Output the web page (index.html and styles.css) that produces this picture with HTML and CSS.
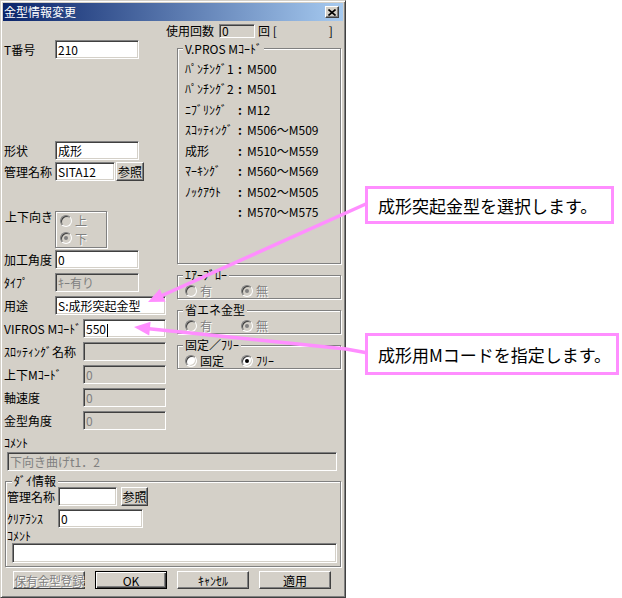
FILE: index.html
```html
<!DOCTYPE html>
<html lang="ja">
<head>
    <meta charset="UTF-8">
    <title>金型情報変更</title>
    <link rel="stylesheet" href="styles.css">
</head>
<body>
<div class="page">
    <!-- Dialog -->
    <div class="window">
        <div class="titlebar">
            <span class="title">金型情報変更</span>
            <span class="close-btn">
                <svg width="8" height="7" viewBox="0 0 8 7"><path d="M0.5 0.5 L7.5 6.5 M7.5 0.5 L0.5 6.5" stroke="#000" stroke-width="1.6"/></svg>
            </span>
        </div>

        <div class="usage">
            <span class="usage-label">使用回数</span>
            <span class="edit edit-usage">0</span>
            <span>回 [</span>
            <span class="usage-end">]</span>
        </div>

        <div class="main">
            <!-- Left column -->
            <div class="left-col">
                <div class="row"><span class="lbl">T番号</span><span class="edit w84">210</span></div>
                <div class="row row-shape"><span class="lbl">形状</span><span class="edit w84">成形</span></div>
                <div class="row row-kanri"><span class="lbl">管理名称</span><span class="edit w60">SITA12</span><span class="btn btn-ref">参照</span></div>
                <div class="row row-dir">
                    <span class="lbl">上下向き</span>
                    <div class="radio-frame etched">
                        <span class="radio disabled"><span class="dot"></span>上</span>
                        <span class="radio disabled"><span class="dot checked"></span>下</span>
                    </div>
                </div>
                <div class="field-list">
                    <div class="row"><span class="lbl">加工角度</span><span class="edit w84">0</span></div>
                    <div class="row"><span class="lbl">ﾀｲﾌﾟ</span><span class="edit disabled w84">ｷｰ有り</span></div>
                    <div class="row"><span class="lbl">用途</span><span class="edit w111">S:成形突起金型</span></div>
                    <div class="row"><span class="lbl lbl-wide">VIFROS Mｺｰﾄﾞ</span><span class="edit w83">550<span class="caret"></span></span></div>
                    <div class="row"><span class="lbl lbl-wide">ｽﾛｯﾃｨﾝｸﾞ名称</span><span class="edit disabled w83"></span></div>
                    <div class="row"><span class="lbl lbl-wide">上下Mｺｰﾄﾞ</span><span class="edit disabled w83">0</span></div>
                    <div class="row"><span class="lbl lbl-wide">軸速度</span><span class="edit disabled w83">0</span></div>
                    <div class="row"><span class="lbl lbl-wide">金型角度</span><span class="edit disabled w83">0</span></div>
                </div>
            </div>

            <!-- Right column -->
            <div class="right-col">
                <fieldset class="group group-mcode">
                    <legend>V.PROS Mｺｰﾄﾞ</legend>
                    <div class="mrow"><span class="mname">ﾊﾟﾝﾁﾝｸﾞ1</span><span class="mcolon">:</span><span>M500</span></div>
                    <div class="mrow"><span class="mname">ﾊﾟﾝﾁﾝｸﾞ2</span><span class="mcolon">:</span><span>M501</span></div>
                    <div class="mrow"><span class="mname">ﾆﾌﾞﾘﾝｸﾞ</span><span class="mcolon">:</span><span>M12</span></div>
                    <div class="mrow"><span class="mname">ｽｺｯﾃｨﾝｸﾞ</span><span class="mcolon">:</span><span>M506～M509</span></div>
                    <div class="mrow"><span class="mname">成形</span><span class="mcolon">:</span><span>M510～M559</span></div>
                    <div class="mrow"><span class="mname">ﾏｰｷﾝｸﾞ</span><span class="mcolon">:</span><span>M560～M569</span></div>
                    <div class="mrow"><span class="mname">ﾉｯｸｱｳﾄ</span><span class="mcolon">:</span><span>M502～M505</span></div>
                    <div class="mrow"><span class="mname"></span><span class="mcolon">:</span><span>M570～M575</span></div>
                </fieldset>

                <fieldset class="group group-radio">
                    <legend>ｴｱｰﾌﾞﾛｰ</legend>
                    <div class="radio-row">
                        <span class="radio disabled"><span class="dot"></span>有</span>
                        <span class="radio disabled"><span class="dot checked"></span>無</span>
                    </div>
                </fieldset>

                <fieldset class="group group-radio">
                    <legend>省エネ金型</legend>
                    <div class="radio-row">
                        <span class="radio disabled"><span class="dot"></span>有</span>
                        <span class="radio disabled"><span class="dot checked"></span>無</span>
                    </div>
                </fieldset>

                <fieldset class="group group-radio">
                    <legend>固定／ﾌﾘｰ</legend>
                    <div class="radio-row">
                        <span class="radio"><span class="dot"></span>固定</span>
                        <span class="radio"><span class="dot checked"></span>ﾌﾘｰ</span>
                    </div>
                </fieldset>
            </div>
        </div>

        <!-- Comment -->
        <div class="comment-lbl">ｺﾒﾝﾄ</div>
        <div class="edit disabled comment-edit">下向き曲げt1．2</div>

        <!-- Die info -->
        <fieldset class="group die">
            <legend>ﾀﾞｲ情報</legend>
            <div class="row"><span class="lbl">管理名称</span><span class="edit w59">&nbsp;</span><span class="btn btn-ref die-ref">参照</span></div>
            <div class="row die-clear"><span class="lbl">ｸﾘｱﾗﾝｽ</span><span class="edit w85">0</span></div>
            <div class="die-comment-lbl">ｺﾒﾝﾄ</div>
            <div class="edit die-comment-edit"></div>
        </fieldset>

        <!-- Buttons -->
        <div class="buttons">
            <span class="btn btn-action disabled">保有金型登録</span>
            <span class="btn btn-action btn-default">OK</span>
            <span class="btn btn-action">ｷｬﾝｾﾙ</span>
            <span class="btn btn-action">適用</span>
        </div>
    </div>

    <!-- Annotations -->
    <svg class="arrows" width="622" height="598" viewBox="0 0 622 598">
        <g stroke="#ff8eff" stroke-width="3.5" fill="none">
            <line x1="368" y1="203" x2="161" y2="296"/>
            <polyline points="368,353 346,349 149,328.7"/>
        </g>
        <g fill="#ff8eff">
            <polygon points="148,302 165.5,301.8 159.7,289"/>
            <polygon points="134,327 150.6,321.7 149.2,335.6"/>
        </g>
    </svg>
    <div class="callout callout-1">成形突起金型を選択します。</div>
    <div class="callout callout-2">成形用Mコードを指定します。</div>
</div>
</body>
</html>
```

FILE: styles.css
```css
/* General */
* {
    box-sizing: border-box;
}

body {
    margin: 0;
    background: #fff;
    font-family: "Noto Sans CJK JP", "Noto Sans", sans-serif;
    font-size: 12px;
    color: #000;
}

.page {
    position: relative;
    width: 622px;
    height: 598px;
}

/* Dialog window */
.window {
    width: 346px;
    height: 598px;
    padding: 2px;
    background: #d4d0c8;
    border: 1px solid;
    border-color: #d4d0c8 #404040 #404040 #d4d0c8;
    box-shadow: inset 1px 1px #fff, inset -1px -1px #808080;
    display: flex;
    flex-direction: column;
}

.titlebar {
    height: 18px;
    flex-shrink: 0;
    display: flex;
    align-items: center;
    justify-content: space-between;
    padding: 0 4px 0 1px;
    background: linear-gradient(to right, #0a246a, #a6caf0);
}

.title {
    color: #fff;
    line-height: 18px;
}

.close-btn {
    width: 14px;
    height: 12px;
    display: flex;
    align-items: center;
    justify-content: center;
    background: #d4d0c8;
    border: 1px solid;
    border-color: #fff #404040 #404040 #fff;
    box-shadow: inset -1px -1px #808080;
}

/* Controls */
.edit {
    display: block;
    height: 19px;
    padding: 0 2px;
    line-height: 17px;
    background: #fff;
    border: 1px solid;
    border-color: #808080 #fff #fff #808080;
    box-shadow: inset 1px 1px #404040, inset -1px -1px #d4d0c8;
    white-space: nowrap;
    overflow: hidden;
}

.edit.disabled {
    background: #d4d0c8;
    color: #808080;
}

.caret {
    display: inline-block;
    width: 1px;
    height: 13px;
    margin-left: 1px;
    background: #000;
    vertical-align: middle;
}

.btn {
    display: flex;
    align-items: center;
    justify-content: center;
    height: 19px;
    background: #d4d0c8;
    border: 1px solid;
    border-color: #fff #404040 #404040 #fff;
    box-shadow: inset -1px -1px #808080;
    white-space: nowrap;
}

.btn.disabled {
    color: #808080;
    text-shadow: 1px 1px #fff;
}

.etched {
    border: 1px solid #808080;
    box-shadow: inset 1px 1px #fff, 1px 1px #fff;
}

.radio {
    display: inline-flex;
    align-items: center;
    gap: 3px;
    height: 13px;
    line-height: 13px;
    white-space: nowrap;
}

.dot {
    width: 12px;
    height: 12px;
    display: flex;
    align-items: center;
    justify-content: center;
    border-radius: 50%;
    background: #fff;
    border: 1px solid;
    border-color: #808080 #fff #fff #808080;
    box-shadow: inset 1px 1px #404040, inset -1px -1px #d4d0c8;
}

.dot.checked::after {
    content: "";
    width: 4px;
    height: 4px;
    border-radius: 50%;
    background: #000;
}

.radio.disabled {
    color: #808080;
    text-shadow: 1px 1px #fff;
}

.radio.disabled .dot {
    background: #d4d0c8;
}

.radio.disabled .dot.checked::after {
    background: #808080;
}

/* Usage counter row */
.usage {
    height: 19px;
    flex-shrink: 0;
    display: flex;
    align-items: center;
    padding-left: 163px;
}

.usage-label {
    margin-right: 5px;
}

.edit-usage {
    width: 36px;
    height: 14px;
    line-height: 12px;
    background: #d4d0c8;
    margin-right: 3px;
    overflow: visible;
}

.usage-end {
    margin-left: 52px;
}

/* Main area */
.main {
    display: flex;
}

.left-col {
    width: 174px;
    display: flex;
    flex-direction: column;
}

.right-col {
    width: 164px;
    display: flex;
    flex-direction: column;
    gap: 5px;
    padding-top: 2px;
}

.row {
    display: flex;
    align-items: center;
    height: 19px;
}

.lbl {
    width: 52px;
    padding-left: 1px;
    white-space: nowrap;
}

.lbl-wide {
    width: 80px;
}

.w59 { width: 59px; }
.w60 { width: 60px; }
.w83 { width: 83px; }
.w84 { width: 84px; }
.w85 { width: 85px; }
.w111 { width: 111px; }

.row-shape {
    margin-top: 82px;
}

.row-kanri {
    margin-top: 2px;
}

.btn-ref {
    width: 28px;
    margin-left: 1px;
}

.row-dir {
    margin-top: 30px;
    height: 37px;
    align-items: flex-start;
}

.row-dir .lbl {
    line-height: 12px;
    padding-left: 2px;
}

.radio-frame {
    width: 52px;
    height: 37px;
    padding: 2px 0 0 4px;
    display: flex;
    flex-direction: column;
    gap: 4.5px;
}

.field-list {
    margin-top: 2px;
    display: flex;
    flex-direction: column;
    gap: 4px;
}

/* Group boxes */
.group {
    margin: 0;
    padding: 0 0 1px 7px;
    min-width: 0;
    border: 1px solid #808080;
    box-shadow: inset 1px 1px #fff, 1px 1px #fff;
}

.group legend {
    margin-left: -2px;
    padding: 0 2px;
    line-height: 13px;
    background: #d4d0c8;
}

.group-mcode {
    height: 222px;
    padding-top: 3px;
}

.mrow {
    display: flex;
    align-items: center;
    height: 20.5px;
}

.mname {
    width: 53px;
    white-space: nowrap;
}

.mcolon {
    width: 9px;
    font-weight: bold;
}

.group-radio {
    padding-top: 3px;
}

.group-radio legend {
    line-height: 12px;
}

.radio-row {
    display: flex;
    height: 13px;
}

.radio-row .radio:first-child {
    width: 56px;
}

/* Comment */
.comment-lbl {
    margin-top: 6px;
    padding-left: 1px;
    line-height: 13px;
}

.comment-edit {
    margin: 3px 0 0 4px;
    width: 330px;
}

/* Die info */
.group.die {
    margin: 4px 2px 0;
    padding: 0 0 3px 0;
}

.group.die legend {
    margin-left: 6px;
    line-height: 12px;
}

.die-ref {
    width: 27px;
    margin-left: 4px;
}

.die-clear {
    margin-top: 3px;
}

.die-comment-lbl {
    margin-top: 2px;
    padding-left: 1px;
    line-height: 12px;
}

.die-comment-edit {
    margin: 1px 0 0 6px;
    width: 325px;
    height: 20px;
}

/* Bottom buttons */
.buttons {
    display: flex;
    gap: 10px;
    padding-left: 10px;
    margin-top: 4px;
}

.btn-action {
    width: 72px;
    height: 18px;
}

.btn-action.disabled {
    letter-spacing: -0.4px;
}

.btn-default {
    border-color: #000;
    box-shadow: inset 1px 1px #fff, inset -1px -1px #404040, inset -2px -2px #808080;
}

/* Annotations */
.arrows {
    position: absolute;
    left: 0;
    top: 0;
    pointer-events: none;
}

.callout {
    position: absolute;
    display: flex;
    align-items: center;
    padding-left: 10px;
    background: #fff;
    border: 3px solid #ff8eff;
    font-size: 17px;
    white-space: nowrap;
}

.callout-1 {
    left: 365px;
    top: 186px;
    width: 249px;
    height: 38px;
}

.callout-2 {
    left: 365px;
    top: 333px;
    width: 254px;
    height: 42px;
}
```
